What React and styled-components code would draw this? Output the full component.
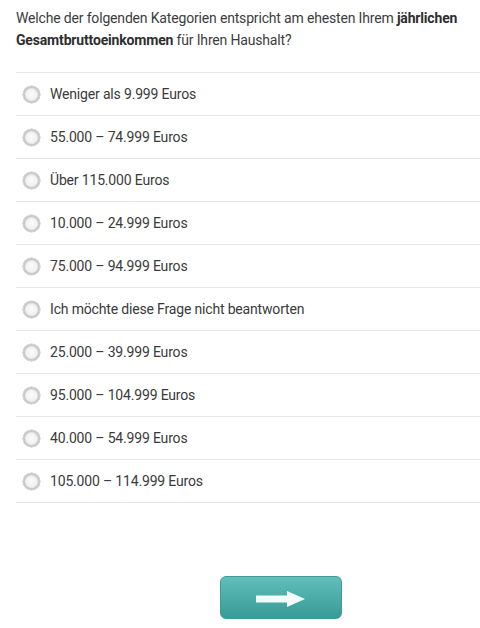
import React from "react";
import styled, { createGlobalStyle } from "styled-components";

const GlobalStyle = createGlobalStyle`
  body {
    margin: 0;
    background: #ffffff;
    font-family: Roboto, "Liberation Sans", sans-serif;
    color: #3a3a3a;
  }
`;

const Page = styled.div`
  width: 480px;
  height: 628px;
  padding-left: 16px;
  box-sizing: border-box;
  display: flex;
  flex-direction: column;
`;

const Question = styled.p`
  margin: 7px 0 0 0;
  font-size: 14px;
  line-height: 22px;
  letter-spacing: -0.17px;
  color: #3c3c3c;

  b {
    font-weight: 700;
    color: #2e2e2e;
  }
`;

const List = styled.div`
  margin-top: 21px;
  border-top: 1px solid #e8e8e8;
`;

const Row = styled.label`
  display: flex;
  align-items: center;
  height: 42px;
  border-bottom: 1px solid #e8e8e8;
  font-size: 14px;
  letter-spacing: -0.17px;
  color: #3a3a3a;
  cursor: pointer;
`;

const Radio = styled.span`
  width: 13px;
  height: 13px;
  margin-left: 7px;
  margin-right: 10px;
  border-radius: 50%;
  border: 2px solid #c9c9c9;
  background: radial-gradient(circle at 50% 45%, #fbfbfb 0%, #f1f1f1 60%, #e2e2e2 100%);
  box-shadow: 0 0 0 0.5px #b8b8b8, inset 0 1px 1px rgba(0, 0, 0, 0.06);
`;

const Footer = styled.div`
  display: flex;
  padding-left: 204px;
  margin-top: 73px;
`;

const NextButton = styled.button`
  width: 122px;
  height: 43px;
  padding: 3px 0 0 0;
  border: 1px solid #3f9a96;
  border-radius: 6px;
  background: linear-gradient(to bottom, #62bfbb 0%, #49aaa6 55%, #3a9a96 100%);
  display: flex;
  align-items: center;
  justify-content: center;
  cursor: pointer;
`;

const options = [
  "Weniger als 9.999 Euros",
  "55.000 – 74.999 Euros",
  "Über 115.000 Euros",
  "10.000 – 24.999 Euros",
  "75.000 – 94.999 Euros",
  "Ich möchte diese Frage nicht beantworten",
  "25.000 – 39.999 Euros",
  "95.000 – 104.999 Euros",
  "40.000 – 54.999 Euros",
  "105.000 – 114.999 Euros",
];

function Arrow() {
  return (
    <svg width="50" height="16" viewBox="0 0 50 16">
      <path d="M0 4.5 H31 V0 L49 8 L31 16 V11.5 H0 Z" fill="#f2fbfa" />
    </svg>
  );
}

export default function App() {
  return (
    <>
      <GlobalStyle />
      <Page>
        <Question>
          Welche der folgenden Kategorien entspricht am ehesten Ihrem{" "}
          <b>jährlichen Gesamtbruttoeinkommen</b> für Ihren Haushalt?
        </Question>
        <List>
          {options.map((o) => (
            <Row key={o}>
              <Radio />
              {o}
            </Row>
          ))}
        </List>
        <Footer>
          <NextButton aria-label="Weiter">
            <Arrow />
          </NextButton>
        </Footer>
      </Page>
    </>
  );
}
